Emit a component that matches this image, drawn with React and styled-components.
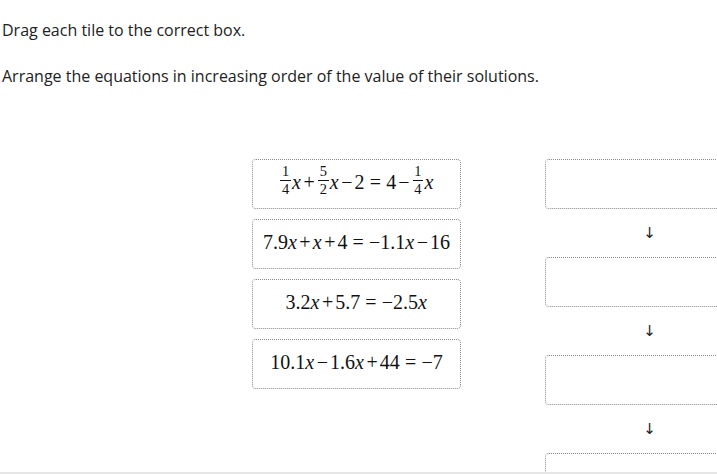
import React from "react";
import styled, { createGlobalStyle } from "styled-components";

const GlobalStyle = createGlobalStyle`
  html, body {
    margin: 0;
    padding: 0;
    background: #ffffff;
    overflow: hidden;
  }
  body {
    font-family: "Open Sans", "Liberation Sans", sans-serif;
    color: #222222;
  }
`;

const Page = styled.div`
  box-sizing: border-box;
  width: 717px;
  height: 474px;
  padding-left: 2px;
  border-bottom: 2px solid #e6e6e6;
  overflow: hidden;
`;

const Prompt = styled.p`
  margin: ${(p) => p.top}px 0 0 0;
  font-size: 16px;
  line-height: 22px;
  white-space: nowrap;
`;

const Board = styled.div`
  display: flex;
  align-items: flex-start;
  gap: 84px;
  margin-top: 72px;
  margin-left: 250px;
`;

const TileColumn = styled.div`
  display: flex;
  flex-direction: column;
  gap: 10px;
  width: 209px;
  flex-shrink: 0;
`;

const Tile = styled.div`
  box-sizing: border-box;
  height: 50px;
  display: flex;
  align-items: center;
  justify-content: center;
  border: 1px dotted #8a8a8a;
  border-radius: 4px;
  background: #ffffff;
`;

const TargetColumn = styled.div`
  display: flex;
  flex-direction: column;
  width: 209px;
  flex-shrink: 0;
`;

const Target = styled.div`
  box-sizing: border-box;
  height: 50px;
  border: 1px dotted #8a8a8a;
  border-radius: 4px;
  background: #ffffff;
`;

const Arrow = styled.div`
  height: 48px;
  display: flex;
  align-items: center;
  justify-content: center;
  font-family: "DejaVu Sans", sans-serif;
  font-size: 15px;
  color: #222222;
`;

const Math = styled.span`
  font-family: "Liberation Serif", "DejaVu Serif", serif;
  font-size: 20px;
  color: #111111;
  display: inline-flex;
  align-items: center;
  white-space: nowrap;
  transform: translateY(-2px);
`;

const Var = styled.i`
  font-style: italic;
  margin-right: 0.03em;
`;

const Op = styled.span`
  margin: 0 ${(p) => (p.rel ? "0.26em" : "0.1em")};
`;

const Frac = styled.span`
  display: inline-flex;
  flex-direction: column;
  align-items: center;
  font-size: 0.72em;
  line-height: 0.95;
  margin: 0 0.08em;
  transform: translateY(-1px);
`;

const Num = styled.span`
  padding: 0 0.12em 1px;
  border-bottom: 1px solid #111111;
`;

const Den = styled.span`
  padding: 2px 0.12em 0;
`;

function Fraction({ n, d }) {
  return (
    <Frac>
      <Num>{n}</Num>
      <Den>{d}</Den>
    </Frac>
  );
}

const tiles = [
  <>
    <Fraction n="1" d="4" />
    <Var>x</Var>
    <Op>+</Op>
    <Fraction n="5" d="2" />
    <Var>x</Var>
    <Op>−</Op>2<Op rel>=</Op>4<Op>−</Op>
    <Fraction n="1" d="4" />
    <Var>x</Var>
  </>,
  <>
    7.9<Var>x</Var>
    <Op>+</Op>
    <Var>x</Var>
    <Op>+</Op>4<Op rel>=</Op>−1.1<Var>x</Var>
    <Op>−</Op>16
  </>,
  <>
    3.2<Var>x</Var>
    <Op>+</Op>5.7<Op rel>=</Op>−2.5<Var>x</Var>
  </>,
  <>
    10.1<Var>x</Var>
    <Op>−</Op>1.6<Var>x</Var>
    <Op>+</Op>44<Op rel>=</Op>−7
  </>,
];

export default function App() {
  return (
    <Page>
      <GlobalStyle />
      <Prompt top={19}>Drag each tile to the correct box.</Prompt>
      <Prompt top={24}>
        Arrange the equations in increasing order of the value of their solutions.
      </Prompt>
      <Board>
        <TileColumn>
          {tiles.map((t, i) => (
            <Tile key={i}>
              <Math>{t}</Math>
            </Tile>
          ))}
        </TileColumn>
        <TargetColumn>
          {[0, 1, 2, 3].map((i) => (
            <React.Fragment key={i}>
              {i > 0 && <Arrow>↓</Arrow>}
              <Target />
            </React.Fragment>
          ))}
        </TargetColumn>
      </Board>
    </Page>
  );
}
